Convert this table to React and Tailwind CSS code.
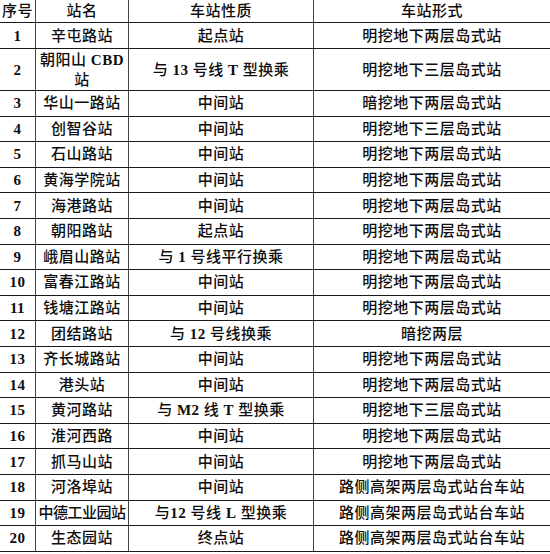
const rows = [
  ["1", "辛屯路站", "起点站", "明挖地下两层岛式站"],
  ["2", "朝阳山 CBD\n站", "与 13 号线 T 型换乘", "明挖地下三层岛式站"],
  ["3", "华山一路站", "中间站", "暗挖地下两层岛式站"],
  ["4", "创智谷站", "中间站", "明挖地下三层岛式站"],
  ["5", "石山路站", "中间站", "明挖地下两层岛式站"],
  ["6", "黄海学院站", "中间站", "明挖地下两层岛式站"],
  ["7", "海港路站", "中间站", "明挖地下两层岛式站"],
  ["8", "朝阳路站", "起点站", "明挖地下两层岛式站"],
  ["9", "峨眉山路站", "与 1 号线平行换乘", "明挖地下两层岛式站"],
  ["10", "富春江路站", "中间站", "明挖地下两层岛式站"],
  ["11", "钱塘江路站", "中间站", "明挖地下两层岛式站"],
  ["12", "团结路站", "与 12 号线换乘", "暗挖两层"],
  ["13", "齐长城路站", "中间站", "明挖地下两层岛式站"],
  ["14", "港头站", "中间站", "明挖地下两层岛式站"],
  ["15", "黄河路站", "与 M2 线 T 型换乘", "明挖地下三层岛式站"],
  ["16", "淮河西路", "中间站", "明挖地下两层岛式站"],
  ["17", "抓马山站", "中间站", "明挖地下两层岛式站"],
  ["18", "河洛埠站", "中间站", "路侧高架两层岛式站台车站"],
  ["19", "中德工业园站", "与12 号线 L 型换乘", "路侧高架两层岛式站台车站"],
  ["20", "生态园站", "终点站", "路侧高架两层岛式站台车站"],
];

const font = { fontFamily: '"Liberation Serif", "Noto Sans CJK SC", serif' };

// latin letters and digits are bold in the source table
const Text = ({ s }) =>
  s.split(/([A-Za-z0-9]+)/).map((part, k) =>
    /^[A-Za-z0-9]+$/.test(part) ? (
      <b key={k} className="font-bold">{part}</b>
    ) : (
      part
    )
  );

const Row = ({ cells, h, header }) => (
  <div className={`grid grid-cols-[36px_93px_185px_1fr] border-b-[1.5px] border-[#1a1a1a] ${h}`}>
    {cells.map((c, i) => (
      <div
        key={i}
        className={`flex items-center justify-center text-center whitespace-pre leading-[20px] text-[15px] font-medium ${
          i < 3 ? "border-r border-[#444]" : ""
        } ${c.length > 5 && i === 1 && !c.includes("CBD") ? "tracking-[-0.5px]" : "tracking-[0.5px]"}`}
      >
        <span>
          <Text s={c} />
        </span>
      </div>
    ))}
  </div>
);

export default function App() {
  return (
    <div className="w-[550px] h-[554px] bg-white text-[#0d0d0d] overflow-hidden" style={font}>
      <Row cells={["序号", "站名", "车站性质", "车站形式"]} h="h-[23px]" header />
      {rows.map((r, i) => (
        <Row key={i} cells={r} h={i === 0 ? "h-[26px]" : i === 1 ? "h-[42px]" : "h-[25.6px]"} />
      ))}
    </div>
  );
}
